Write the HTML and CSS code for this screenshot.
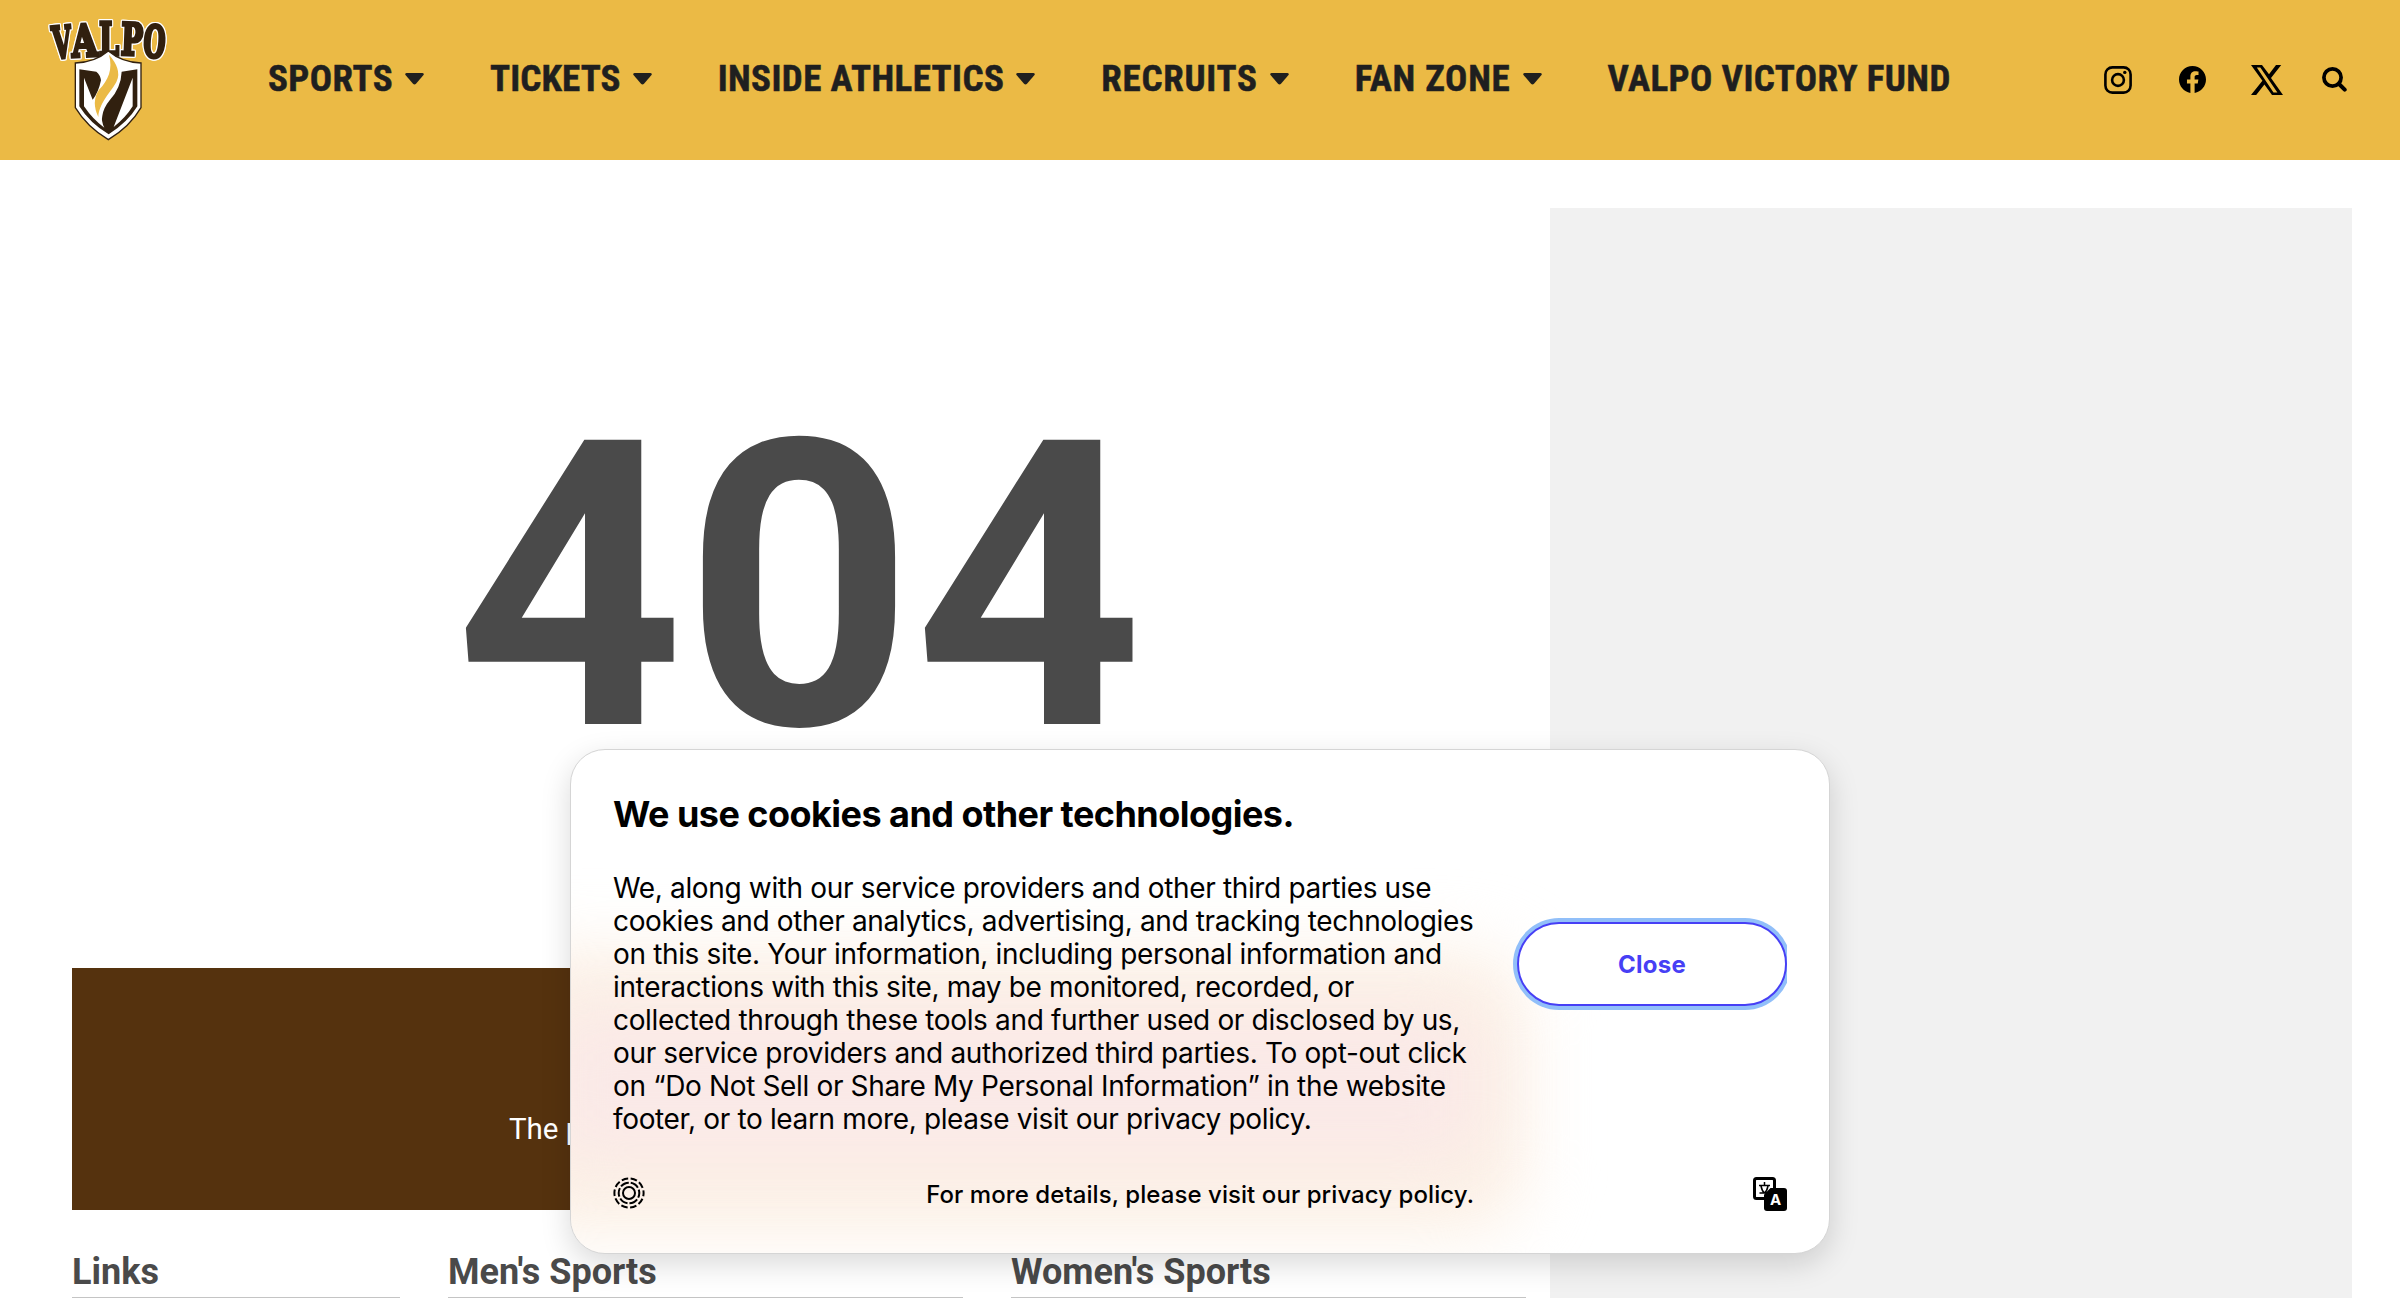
FILE: index.html
```html
<!DOCTYPE html>
<html lang="en">
<head>
<meta charset="utf-8">
<title>404 - Valpo Athletics</title>
<link rel="stylesheet" href="styles.css">
</head>
<body>
<header class="site-header">
  <a class="logo" aria-label="Valpo">
    <svg viewBox="55 50 360 372" width="120" height="124">
      <g class="logo-word">
        <text x="68" y="173" textLength="58" lengthAdjust="spacingAndGlyphs" transform="rotate(-5 95 130)">V</text>
        <text x="125" y="168" textLength="78" lengthAdjust="spacingAndGlyphs" transform="rotate(-3 163 120)">A</text>
        <text x="208" y="163" textLength="60" lengthAdjust="spacingAndGlyphs">L</text>
        <text x="274" y="164" textLength="66" lengthAdjust="spacingAndGlyphs" transform="rotate(2 307 120)">P</text>
        <text x="342" y="171" textLength="66" lengthAdjust="spacingAndGlyphs" transform="rotate(4 375 125)">O</text>
      </g>
      <path d="M236 152Q276 186 334 188V322Q300 380 236 418Q172 380 137 322V188Q196 186 236 152Z" fill="#fff" stroke="#31200f" stroke-width="4"/>
      <path fill="#31200f" d="M149 207L200 214Q212 224 214 240Q206 278 189 298L163 232V318Q190 358 224 382Q214 362 218 346Q222 322 240 300Q274 262 276 214L323 207V318Q294 366 237 402Q180 368 149 318ZM309 232L252 380Q288 352 309 318Z" fill-rule="evenodd"/>
      <path d="M238 163Q276 206 262 240C256 262 208 304 206 350Q184 304 208 268C236 240 250 206 238 163Z" fill="#ebba45"/>
    </svg>
  </a>
  <nav class="main-nav">
    <a class="nav-item"><span class="label-sports">SPORTS</span><svg class="caret" viewBox="0 0 19 12"><path d="M1.5 0H17.5Q19.5 .5 18.5 2L11 10.8Q9.5 12.3 8 10.8L.5 2Q-.5 .5 1.5 0Z"/></svg></a>
    <a class="nav-item"><span class="label-tickets">TICKETS</span><svg class="caret" viewBox="0 0 19 12"><path d="M1.5 0H17.5Q19.5 .5 18.5 2L11 10.8Q9.5 12.3 8 10.8L.5 2Q-.5 .5 1.5 0Z"/></svg></a>
    <a class="nav-item"><span>INSIDE ATHLETICS</span><svg class="caret" viewBox="0 0 19 12"><path d="M1.5 0H17.5Q19.5 .5 18.5 2L11 10.8Q9.5 12.3 8 10.8L.5 2Q-.5 .5 1.5 0Z"/></svg></a>
    <a class="nav-item"><span class="label-wide">RECRUITS</span><svg class="caret" viewBox="0 0 19 12"><path d="M1.5 0H17.5Q19.5 .5 18.5 2L11 10.8Q9.5 12.3 8 10.8L.5 2Q-.5 .5 1.5 0Z"/></svg></a>
    <a class="nav-item"><span class="label-wide">FAN ZONE</span><svg class="caret" viewBox="0 0 19 12"><path d="M1.5 0H17.5Q19.5 .5 18.5 2L11 10.8Q9.5 12.3 8 10.8L.5 2Q-.5 .5 1.5 0Z"/></svg></a>
    <a class="nav-item"><span>VALPO VICTORY FUND</span></a>
  </nav>
  <div class="social">
    <svg width="28" height="28" viewBox="0 0 28 28" fill="none" stroke="#000"><rect x="1.4" y="1.4" width="25.2" height="25.2" rx="7" stroke-width="2.6"/><circle cx="14" cy="14" r="5.9" stroke-width="2.6"/><circle cx="20.8" cy="6.4" r="1.7" fill="#000" stroke="none"/></svg>
    <svg class="facebook" width="27" height="27" viewBox="0 0 24 24"><path d="M24 12.07C24 5.4 18.63 0 12 0S0 5.4 0 12.07C0 18.1 4.39 23.1 10.13 24v-8.44H7.08v-3.49h3.05V9.41c0-3.02 1.79-4.69 4.53-4.69 1.31 0 2.68.24 2.68.24v2.97h-1.51c-1.49 0-1.95.93-1.95 1.88v2.26h3.32l-.53 3.49h-2.79V24C19.61 23.1 24 18.1 24 12.07z"/></svg>
    <svg class="x-logo" width="32" height="30" viewBox="0 0 32 30"><path fill-rule="evenodd" d="M0 0H11L18 9.200L25 0H30.200L20 13L32 30H21L13.400 19.500L5.200 30H0L11.400 15.800ZM5.800 2.400L22.500 27.600H26.400L9.300 2.400Z"/></svg>
    <svg class="search" width="25" height="25" viewBox="0 0 25 25" fill="none" stroke="#000"><circle cx="10.500" cy="10.500" r="8.600" stroke-width="3.700"/><path d="M17 17L22.700 22.700" stroke-width="4" stroke-linecap="round"/></svg>
  </div>
</header>
<main class="page">
  <div class="content">
    <section class="error-code">404</section>
    <section class="banner"><p>The page you requested could not be found.</p></section>
    <div class="link-columns">
      <h2>Links</h2>
      <h2>Men's Sports</h2>
      <h2>Women's Sports</h2>
    </div>
  </div>
  <aside class="sidebar"></aside>
</main>
<div class="cookie" role="dialog">
  <div class="glow glow-outer"></div>
  <div class="glow glow-inner"></div>
  <div class="cookie-text">
    <h3>We use cookies and other technologies.</h3>
    <p>We, along with our service providers and other third parties use<br>cookies and other analytics, advertising, and tracking technologies<br>on this site. Your information, including personal information and<br>interactions with this site, may be monitored, recorded, or<br>collected through these tools and further used or disclosed by us,<br>our service providers and authorized third parties. To opt-out click<br>on “Do Not Sell or Share My Personal Information” in the website<br>footer, or to learn more, please visit our privacy policy.</p>
    <div class="cookie-foot">
      <svg width="32" height="32" viewBox="0 0 32 32" fill="none" stroke="#000" stroke-width="2"><circle cx="16" cy="16" r="6"/><circle cx="16" cy="16" r="10.300" stroke-dasharray="8.800 2" stroke-dashoffset="4"/><circle cx="16" cy="16" r="14.600" stroke-dasharray="6.600 2.570" stroke-dashoffset="3.300"/></svg>
      <span>For more details, please visit our privacy policy.</span>
    </div>
  </div>
  <div class="cookie-side">
    <div class="button-clip"><button class="close">Close</button></div>
    <svg class="translate" width="34" height="34" viewBox="0 0 34 34"><path d="M11 21.500H3.500Q1.500 21.500 1.500 19.500V3.500Q1.500 1.500 3.500 1.500H19.500Q21.500 1.500 21.500 3.500V11" fill="none" stroke="#000" stroke-width="3"/><path d="M11.500 5V8M6 8.500H17M8 9Q9 14 11.500 16H6.500M15 9Q14 14 11.500 16H14" fill="none" stroke="#000" stroke-width="1.500"/><path d="M17.500 11H31Q34 11 34 14V31Q34 34 31 34H14Q11 34 11 31V17.500Z"/><text class="translate-a" x="22.500" y="28" text-anchor="middle">A</text></svg>
  </div>
</div>
</body>
</html>
```
FILE: styles.css
```css
* { box-sizing: border-box; }
body { margin: 0; height: 1298px; overflow: hidden; background: #fff; font-family: Roboto, sans-serif; color: #4a4a4a; }
h2, h3, p { margin: 0; }

.site-header { height: 160px; background: #ebba45; display: flex; align-items: center; padding: 0 53px 2px 48px; }
.logo { width: 120px; height: 124px; }
.logo svg { display: block; }
.logo-word { font: bold 132px "DejaVu Serif", serif; fill: #31200f; stroke: #31200f; stroke-width: 10; filter: drop-shadow(3px 0 0 #fff) drop-shadow(-3px 0 0 #fff) drop-shadow(0 3px 0 #fff) drop-shadow(0 -3px 0 #fff); }
.main-nav { display: flex; gap: 66px; margin-left: 100px; }
.nav-item { display: flex; align-items: center; gap: 12px; font-size: 37px; font-weight: 700; line-height: 42px; color: #1f1f1f; white-space: nowrap; font-stretch: 85%; letter-spacing: .4px; -webkit-text-stroke: .5px #1f1f1f; }
.nav-item span { padding-bottom: 1px; }
.label-sports { letter-spacing: .4px; }
.label-tickets { letter-spacing: .1px; }
.label-wide { letter-spacing: .75px; }
.caret { width: 19px; height: 12px; fill: #1f1f1f; }
.social { display: flex; align-items: center; margin-left: auto; padding-top: 1px; }
.facebook { margin-left: 47px; }
.x-logo { margin-left: 45px; }
.search { margin-left: 39px; }

.page { display: flex; justify-content: space-between; padding: 48px 48px 0; height: 1138px; }
.content { width: 1502px; }
.error-code { height: 760px; font-size: 400px; font-weight: 700; line-height: 760px; text-align: center; }
.banner { margin: 0 24px; height: 242px; background: #55320e; color: #fff; font-size: 29.5px; padding: 144px 0 0 437px; line-height: 34px; }
.link-columns { display: grid; grid-template-columns: 328px 515px 515px; column-gap: 48px; margin: 40px 24px 0; }
.link-columns h2 { height: 48px; border-bottom: 1px solid #c4c4c4; font-size: 36px; line-height: 44px; font-weight: 700; white-space: nowrap; }
.sidebar { width: 802px; background: #f1f1f1; }

.cookie { position: absolute; left: 570px; top: 749px; width: 1260px; height: 505px; border: 1px solid #d5d5d5; border-radius: 35px; background: #fff; box-shadow: 0 10px 30px rgba(0, 0, 0, .15); overflow: hidden; font-family: Inter, sans-serif; color: #000; display: flex; justify-content: space-between; padding: 0 42px; }
.glow { position: absolute; }
.glow-outer { left: -80px; top: 200px; width: 1035px; height: 285px; background: #fcf1e6; filter: blur(34px); border-radius: 60px; }
.glow-inner { left: -30px; top: 258px; width: 945px; height: 155px; background: #fae9e7; filter: blur(32px); border-radius: 40px; }
.cookie-text { position: relative; width: 861px; }
.cookie-text h3 { margin-top: 42px; font-size: 36px; line-height: 44px; font-weight: 700; letter-spacing: -.54px; white-space: nowrap; }
.cookie-text p { margin-top: 36px; font-size: 28px; line-height: 33px; letter-spacing: -.35px; white-space: nowrap; }
.cookie-foot { margin-top: 41px; display: flex; align-items: center; justify-content: space-between; font-size: 24px; font-weight: 500; letter-spacing: .07px; }
.cookie-foot span { padding-top: 3px; }
.cookie-side { position: relative; width: 274px; display: flex; flex-direction: column; align-items: flex-end; }
.button-clip { width: 274px; margin-top: 168px; padding: 4px 0 4px 4px; overflow: hidden; }
.close { display: block; width: 270px; height: 84px; padding: 0; border: 2px solid #473ff5; border-radius: 42px; background: #fff; box-shadow: 0 0 0 4px #91bff9; color: #473ff5; font: 700 24px Inter, sans-serif; letter-spacing: .3px; }
.translate { margin-top: 167px; }
.translate-a { font: bold 15px Inter, sans-serif; fill: #fff; }
```
